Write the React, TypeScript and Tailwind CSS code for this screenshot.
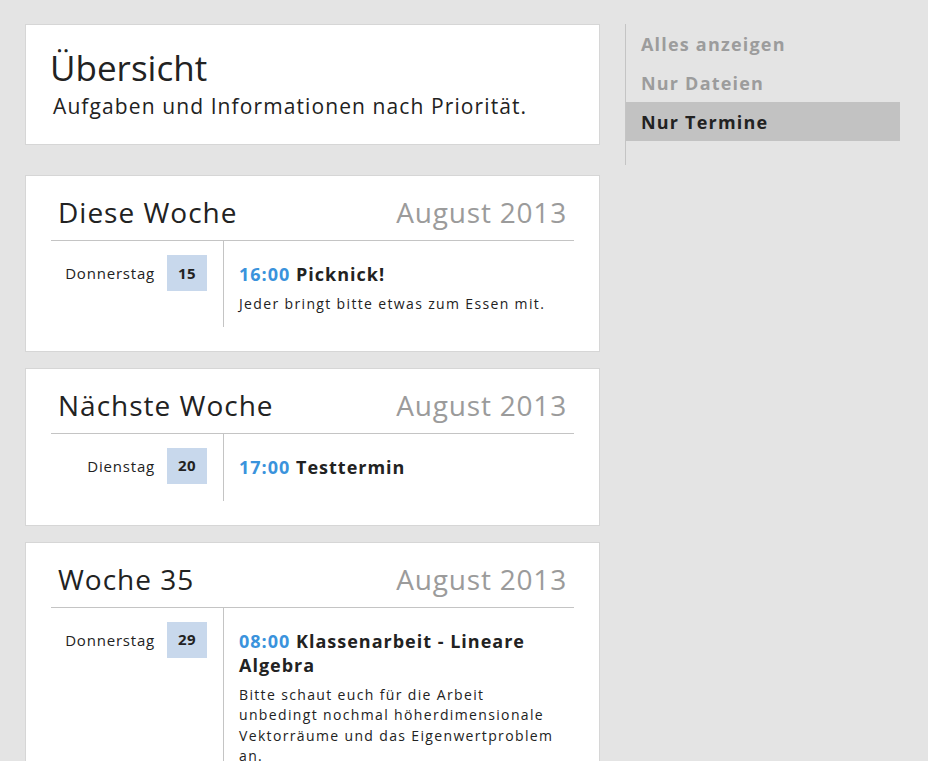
import React from 'react';

interface Termin {
  day: string;
  date: string;
  time: string;
  title: string;
  text?: string;
}

interface Week {
  title: string;
  month: string;
  items: Termin[];
}

const weeks: Week[] = [
  {
    title: 'Diese Woche',
    month: 'August 2013',
    items: [{ day: 'Donnerstag', date: '15', time: '16:00', title: 'Picknick!', text: 'Jeder bringt bitte etwas zum Essen mit.' }],
  },
  {
    title: 'Nächste Woche',
    month: 'August 2013',
    items: [{ day: 'Dienstag', date: '20', time: '17:00', title: 'Testtermin' }],
  },
  {
    title: 'Woche 35',
    month: 'August 2013',
    items: [
      {
        day: 'Donnerstag',
        date: '29',
        time: '08:00',
        title: 'Klassenarbeit - Lineare Algebra',
        text: 'Bitte schaut euch für die Arbeit unbedingt nochmal höherdimensionale Vektorräume und das Eigenwertproblem an.',
      },
    ],
  },
];

const filters = ['Alles anzeigen', 'Nur Dateien', 'Nur Termine'];

function WeekCard({ week }: { week: Week }) {
  return (
    <section className="bg-white border border-[#d6d6d6] px-[25px] pb-[24px]">
      <div className="flex items-end justify-between h-[65px] border-b border-[#c4c4c4] pb-[14px] px-[7px]">
        <h2 className="text-[28px] font-normal leading-none text-[#222] tracking-[1px]">{week.title}</h2>
        <span className="text-[28px] leading-none text-[#9b9b9b] tracking-[0.8px]">{week.month}</span>
      </div>
      {week.items.map((item, i) => (
        <div key={i} className="flex">
          <div className="w-[173px] shrink-0 border-r border-[#c4c4c4] flex justify-end items-start pt-[14px] pr-[16px] pb-[17px]">
            <span className="text-[15px] leading-[36px] tracking-[0.8px] text-[#222] mr-[12px]">{item.day}</span>
            <span className="w-[40px] h-[36px] bg-[#c8d8ec] flex items-center justify-center text-[15px] font-bold text-[#222] tracking-[0.5px]">
              {item.date}
            </span>
          </div>
          <div className="pl-[15px] pr-[16px] pt-[21px] pb-[12px]">
            <div className="text-[18px] font-bold leading-[24px] tracking-[1px] text-[#222]">
              <span className="text-[#3a93dc]">{item.time}</span> {item.title}
            </div>
            {item.text && (
              <p className="mt-[8px] text-[14px] leading-[20.5px] tracking-[1.35px] text-[#222]">{item.text}</p>
            )}
          </div>
        </div>
      ))}
    </section>
  );
}

export default function App() {
  return (
    <div className="min-h-screen bg-[#e4e4e4] font-['Open_Sans',sans-serif] flex items-start gap-[25px] pl-[25px] pt-[24px]">
      <main className="w-[575px] shrink-0 flex flex-col gap-[16px]">
        <header className="bg-white border border-[#d6d6d6] h-[121px] pl-[24px] pt-[21px] mb-[14px]">
          <h1 className="text-[35px] font-normal leading-[44px] text-[#222]">Übersicht</h1>
          <p className="ml-[3px] mt-[3px] text-[21px] leading-[26px] tracking-[1.1px] text-[#222]">Aufgaben und Informationen nach Priorität.</p>
        </header>
        {weeks.map((w) => (
          <WeekCard key={w.title} week={w} />
        ))}
      </main>
      <nav className="w-[275px] border-l border-[#c4c4c4] pb-[24px]">
        {filters.map((f, i) => (
          <div
            key={f}
            className={`h-[39px] flex items-center pl-[15px] pt-[2px] text-[18px] font-bold tracking-[1.2px] ${
              i === 2 ? 'bg-[#c2c2c2] text-[#222]' : 'text-[#9c9c9c]'
            }`}
          >
            {f}
          </div>
        ))}
      </nav>
    </div>
  );
}
